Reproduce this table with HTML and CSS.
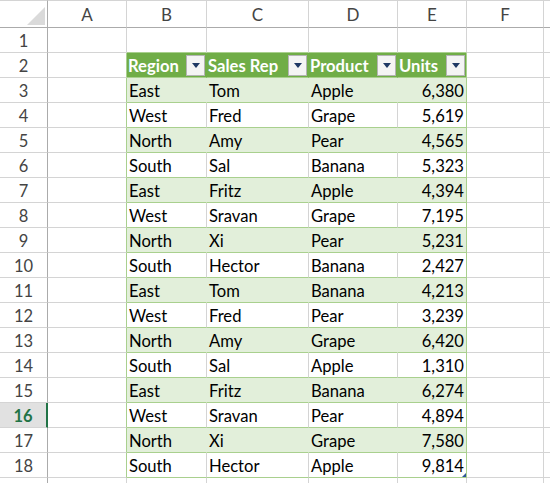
FILE: index.html
```html
<!DOCTYPE html>
<html>
<head>
<meta charset="utf-8">
<link rel="stylesheet" href="styles.css">
</head>
<body>
<div class="sheet">
  <div class="row">
    <div class="corner"><svg width="18" height="18" viewBox="0 0 18 18"><polygon points="18,0 18,18 0,18" fill="#dadada"/></svg></div>
    <div class="ch">A</div><div class="ch">B</div><div class="ch">C</div><div class="ch">D</div><div class="ch">E</div><div class="ch">F</div><div class="ch rest"></div>
  </div>
  <div class="row">
    <div class="rh">1</div><div class="c"></div><div class="c above"></div><div class="c above"></div><div class="c above"></div><div class="c above"></div><div class="c"></div><div class="c rest"></div>
  </div>
  <div class="row">
    <div class="rh">2</div><div class="c left"></div>
    <div class="th"><span>Region</span><span class="fb"><svg width="8" height="5" viewBox="0 0 8 5"><polygon points="0,0 8,0 4,5" fill="#1f3864"/></svg></span></div>
    <div class="th"><span>Sales Rep</span><span class="fb"><svg width="8" height="5" viewBox="0 0 8 5"><polygon points="0,0 8,0 4,5" fill="#1f3864"/></svg></span></div>
    <div class="th"><span>Product</span><span class="fb"><svg width="8" height="5" viewBox="0 0 8 5"><polygon points="0,0 8,0 4,5" fill="#1f3864"/></svg></span></div>
    <div class="th last"><span>Units</span><span class="fb"><svg width="8" height="5" viewBox="0 0 8 5"><polygon points="0,0 8,0 4,5" fill="#1f3864"/></svg></span></div>
    <div class="c"></div><div class="c rest"></div>
  </div>
  <div class="row band"><div class="rh">3</div><div class="c left"></div><div class="t">East</div><div class="t">Tom</div><div class="t">Apple</div><div class="t last num">6,380</div><div class="c"></div><div class="c rest"></div></div>
  <div class="row"><div class="rh">4</div><div class="c left"></div><div class="t">West</div><div class="t">Fred</div><div class="t">Grape</div><div class="t last num">5,619</div><div class="c"></div><div class="c rest"></div></div>
  <div class="row band"><div class="rh">5</div><div class="c left"></div><div class="t">North</div><div class="t">Amy</div><div class="t">Pear</div><div class="t last num">4,565</div><div class="c"></div><div class="c rest"></div></div>
  <div class="row"><div class="rh">6</div><div class="c left"></div><div class="t">South</div><div class="t">Sal</div><div class="t">Banana</div><div class="t last num">5,323</div><div class="c"></div><div class="c rest"></div></div>
  <div class="row band"><div class="rh">7</div><div class="c left"></div><div class="t">East</div><div class="t">Fritz</div><div class="t">Apple</div><div class="t last num">4,394</div><div class="c"></div><div class="c rest"></div></div>
  <div class="row"><div class="rh">8</div><div class="c left"></div><div class="t">West</div><div class="t">Sravan</div><div class="t">Grape</div><div class="t last num">7,195</div><div class="c"></div><div class="c rest"></div></div>
  <div class="row band"><div class="rh">9</div><div class="c left"></div><div class="t">North</div><div class="t">Xi</div><div class="t">Pear</div><div class="t last num">5,231</div><div class="c"></div><div class="c rest"></div></div>
  <div class="row"><div class="rh">10</div><div class="c left"></div><div class="t">South</div><div class="t">Hector</div><div class="t">Banana</div><div class="t last num">2,427</div><div class="c"></div><div class="c rest"></div></div>
  <div class="row band"><div class="rh">11</div><div class="c left"></div><div class="t">East</div><div class="t">Tom</div><div class="t">Banana</div><div class="t last num">4,213</div><div class="c"></div><div class="c rest"></div></div>
  <div class="row"><div class="rh">12</div><div class="c left"></div><div class="t">West</div><div class="t">Fred</div><div class="t">Pear</div><div class="t last num">3,239</div><div class="c"></div><div class="c rest"></div></div>
  <div class="row band"><div class="rh">13</div><div class="c left"></div><div class="t">North</div><div class="t">Amy</div><div class="t">Grape</div><div class="t last num">6,420</div><div class="c"></div><div class="c rest"></div></div>
  <div class="row"><div class="rh">14</div><div class="c left"></div><div class="t">South</div><div class="t">Sal</div><div class="t">Apple</div><div class="t last num">1,310</div><div class="c"></div><div class="c rest"></div></div>
  <div class="row band"><div class="rh">15</div><div class="c left"></div><div class="t">East</div><div class="t">Fritz</div><div class="t">Banana</div><div class="t last num">6,274</div><div class="c"></div><div class="c rest"></div></div>
  <div class="row"><div class="rh sel">16</div><div class="c left"></div><div class="t">West</div><div class="t">Sravan</div><div class="t">Pear</div><div class="t last num">4,894</div><div class="c"></div><div class="c rest"></div></div>
  <div class="row band"><div class="rh">17</div><div class="c left"></div><div class="t">North</div><div class="t">Xi</div><div class="t">Grape</div><div class="t last num">7,580</div><div class="c"></div><div class="c rest"></div></div>
  <div class="row"><div class="rh">18</div><div class="c left"></div><div class="t">South</div><div class="t">Hector</div><div class="t">Apple</div><div class="t last num handle">9,814</div><div class="c"></div><div class="c rest"></div></div>
  <div class="row"><div class="rh"></div><div class="c"></div><div class="c"></div><div class="c"></div><div class="c"></div><div class="c"></div><div class="c"></div><div class="c rest"></div></div>
</div>
</body>
</html>
```

FILE: styles.css
```css
html, body {
  margin: 0;
  padding: 0;
  background: #fff;
  overflow: hidden;
}
.sheet {
  display: grid;
  grid-template-columns: 48px 79px 80px 102px 89px 69px 77px 1fr;
  grid-template-rows: 28px repeat(19, 25px);
  font-family: Lato, "Liberation Sans", sans-serif;
  font-size: 16.6px;
  color: #000;
  width: 550px;
}
.row { display: contents; }
.row > div {
  box-sizing: border-box;
  border-right: 1px solid #d4d4d4;
  border-bottom: 1px solid #d4d4d4;
  display: flex;
  align-items: center;
  white-space: nowrap;
  overflow: hidden;
  padding-top: 2px;
}
.corner {
  border-top: 1px solid #d4d4d4;
  justify-content: flex-end;
  align-items: flex-end !important;
  padding: 0 2px 2px 0 !important;
  border-right-color: #ababab !important;
  border-bottom-color: #ababab !important;
}
.ch {
  border-top: 1px solid #d4d4d4;
  border-bottom-color: #ababab !important;
  justify-content: center;
  color: #444;
  font-size: 17px;
  padding-top: 0 !important;
}
.rh {
  border-right-color: #ababab !important;
  justify-content: center;
  color: #444;
  font-size: 16.5px;
}
.rh.sel {
  background: #e1e1e1;
  color: #217346;
  font-weight: bold;
  border-right: 2px solid #217346 !important;
}
.rest { border-right: none !important; }
.c.above { border-bottom-color: #a9d08e; }
.c.left { border-right-color: #a9d08e; }
.th {
  background: #70ad47;
  color: #fff;
  font-weight: bold;
  border-right-color: #70ad47 !important;
  border-bottom-color: #a9d08e !important;
  justify-content: space-between;
  padding-left: 1px;
  padding-right: 1px;
  padding-top: 0 !important;
}
.th span:first-child { padding-top: 2px; }
.th.last { border-right-color: #a9d08e !important; }
.fb {
  box-sizing: border-box;
  width: 19px;
  height: 21px;
  background: #f4f4f4;
  border: 1px solid #b4b4b4;
  display: flex;
  align-items: center;
  justify-content: center;
  flex: none;
}
.t {
  border-bottom-color: #a9d08e !important;
  padding-left: 2px;
  padding-right: 2px;
}
.band .t {
  background: #e2efda;
  border-right-color: #e2efda;
}
.t.last { border-right-color: #a9d08e !important; }
.t.num { justify-content: flex-end; }
.handle { position: relative; }
.handle::after {
  content: "";
  position: absolute;
  right: 0;
  bottom: 0;
  width: 0;
  height: 0;
  border-left: 4px solid transparent;
  border-bottom: 4px solid #2f5597;
}
```
